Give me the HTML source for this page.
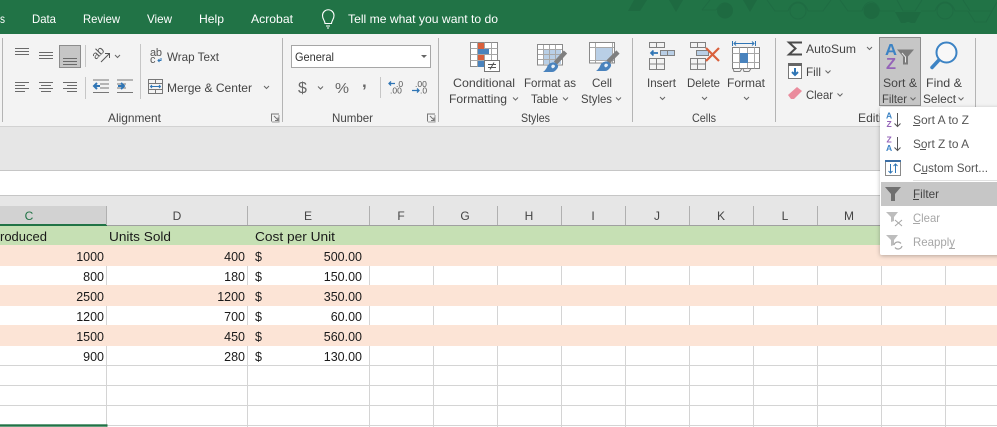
<!DOCTYPE html>
<html><head><meta charset="utf-8">
<style>
html,body{margin:0;padding:0;background:#fff;width:997px;height:427px;overflow:hidden}
svg{display:block}
text{font-family:"Liberation Sans",sans-serif;font-size:12px;fill:#444}
.t{fill:#fff;font-size:12px}
.r{fill:#444;font-size:12px}
.c{fill:#1a1a1a;font-size:12.5px}
.n{text-anchor:end}
.h{font-size:12px;fill:#444;text-anchor:middle}
.ln{stroke:#6a6a6a;stroke-width:1;fill:none}
.g{stroke:#8a8a8a;stroke-width:1;fill:none}
.ch{stroke:#666;stroke-width:1;fill:none}
.sep{stroke:#c6c6c6;stroke-width:1}
.gs{stroke:#b4b4b4;stroke-width:1}
</style></head>
<body>
<svg width="997" height="427" viewBox="0 0 997 427" xmlns="http://www.w3.org/2000/svg">
<defs>
<filter id="sh" x="-10%" y="-10%" width="120%" height="120%"><feDropShadow dx="0" dy="1" stdDeviation="2" flood-color="#000" flood-opacity=".28"/></filter>
</defs>
<!-- title bar -->
<rect width="997" height="34" fill="#217346"/>
<g fill="#1e6a41">
<path d="M634 0h13l-7 11h-12z"/><path d="M669 0h14l-7 12z"/><path d="M743 0h14l-7 12z"/>
<circle cx="725" cy="10.500" r="8"/><circle cx="871.500" cy="11" r="8"/>
<path d="M895 12h26l-6 11h-4l-2-1h-2l-2 1h-4z"/>
</g>
<g fill="none" stroke="#1f6c43" stroke-width="1">
<path d="M702 10h14M702 10l8-10M716 10c2-3 4-5 6-6"/>
<path d="M767 0l8 11h13M788 11c2-6 6-9 10-9s8 3 10 9M808 11h15l8-11"/>
<circle cx="798" cy="11" r="8"/>
<path d="M840 0l8 11h14M862 11c2-6 5-9 9-9s7 3 9 9h15M897 0l6 11h12l7-11"/>
<path d="M921 11h14M935 11c2-6 6-9 10-9s8 3 10 9h13"/>
<circle cx="945" cy="11" r="8"/>
<path d="M963 0l7 11h22l5-9M968 11l7 11h11l6-11"/>
</g>
<text class="t" x="0" y="23" textLength="5" lengthAdjust="spacingAndGlyphs">s</text>
<text class="t" x="32" y="23" textLength="24" lengthAdjust="spacingAndGlyphs">Data</text>
<text class="t" x="83" y="23" textLength="37" lengthAdjust="spacingAndGlyphs">Review</text>
<text class="t" x="147" y="23" textLength="25" lengthAdjust="spacingAndGlyphs">View</text>
<text class="t" x="199" y="23" textLength="25" lengthAdjust="spacingAndGlyphs">Help</text>
<text class="t" x="251" y="23" textLength="42" lengthAdjust="spacingAndGlyphs">Acrobat</text>
<text class="t" x="348" y="23" textLength="150" lengthAdjust="spacingAndGlyphs">Tell me what you want to do</text>
<path d="M325 23.500c0-3-2.500-4-2.500-8a5.700 5.700 0 0 1 11.500 0c0 4-2.500 5-2.500 8zM326 26h4M327 28h2" fill="none" stroke="#fff" stroke-width="1.100"/>

<!-- ribbon -->
<rect y="34" width="997" height="92" fill="#f3f3f3"/>
<rect y="126" width="997" height="1" fill="#d2d2d2"/>
<rect y="127" width="997" height="43" fill="#e6e6e6"/>
<rect y="170" width="997" height="1" fill="#c6c6c6"/>
<rect y="171" width="997" height="24" fill="#fff"/>
<rect y="195" width="997" height="1" fill="#c6c6c6"/>
<g class="gs"><path d="M2.500 38v84M282.500 38v84M438.500 38v84M632.500 38v84M775.500 38v84M975.500 38v84" stroke="#b4b4b4"/></g>

<!-- alignment -->
<path class="ln" d="M15 48.500h14M15 51.500h14M15 54.500h14M39 52.500h14M39 55.500h14M39 58.500h14"/>
<rect x="59.500" y="45.500" width="21" height="22" fill="#c6c6c6" stroke="#8c8c8c"/>
<path class="ln" d="M63 58.500h14M63 61.500h14M63 64.500h14"/>
<path class="ln" d="M15 82.500h14M15 85.500h10M15 88.500h14M15 91.500h10M39 82.500h14M41 85.500h10M39 88.500h14M41 91.500h10M63 82.500h14M67 85.500h10M63 88.500h14M67 91.500h10"/>
<path class="sep" d="M85.500 45v22M85.500 77v22M140.500 44v55"/>
<text transform="translate(96,60) rotate(-45)" style="font-size:11.500px;fill:#555">ab</text>
<path d="M101 62l8-8M105 53.500h4.500v4.500" fill="none" stroke="#555" stroke-width="1"/>
<path class="ch" d="M115 55l2.500 2.500 2.500-2.500"/>
<path d="M93 80h16M100 84h9M100 88h9M93 92.500h16" fill="none" stroke="#777"/>
<path d="M94 86h6M97 83l-3 3 3 3" fill="none" stroke="#2f75b5" stroke-width="2"/>
<path d="M117 80h16M117 84h9M117 88h9M117 92.500h16" fill="none" stroke="#777"/>
<path d="M118 86h6M121 83l3 3-3 3" fill="none" stroke="#2f75b5" stroke-width="2"/>
<text x="150" y="56" style="font-size:11px;fill:#555" textLength="12">ab</text>
<text x="150" y="63" style="font-size:11px;fill:#555">c</text>
<path d="M161 58v2.500h-3M159.500 59l-1.500 1.500 1.500 1.500" fill="none" stroke="#2f75b5"/>
<text class="r" x="167" y="61" textLength="52" lengthAdjust="spacingAndGlyphs">Wrap Text</text>
<rect x="148.500" y="79.500" width="14" height="14" fill="none" stroke="#777"/>
<path d="M148.500 83.500h14M148.500 89.500h14M155.500 79.500v4M155.500 89.500v4" stroke="#777" fill="none"/>
<path d="M150.500 86.500h10M152 85l-1.500 1.500 1.500 1.500M159 85l1.500 1.500-1.500 1.500" stroke="#2f75b5" fill="none"/>
<text class="r" x="167" y="92" textLength="85" lengthAdjust="spacingAndGlyphs">Merge &amp; Center</text>
<path class="ch" d="M264 86l2.500 2.500 2.500-2.500"/>
<text class="r" x="108" y="122" textLength="53" lengthAdjust="spacingAndGlyphs">Alignment</text>
<g fill="none" stroke="#777"><path d="M271.500 121.500v-7.500h7.500"/><path d="M279 115v7h-7" stroke="#999"/><path d="M274 116l4 4M278 117.500v3h-3"/></g>

<!-- number -->
<rect x="291.500" y="45.500" width="139" height="22" fill="#fff" stroke="#a6a6a6"/>
<text class="r" x="295" y="61" textLength="39" lengthAdjust="spacingAndGlyphs" style="fill:#333">General</text>
<path d="M421 55h6l-3 3z" fill="#666"/>
<text x="298" y="93" style="font-size:16px;fill:#666" textLength="9">$</text>
<path class="ch" d="M318 86.500l2.500 2.500 2.500-2.500"/>
<text x="335" y="93" style="font-size:15px;fill:#666" textLength="14" lengthAdjust="spacingAndGlyphs">%</text>
<text x="362" y="87" style="font-size:17px;font-weight:bold;fill:#666">,</text>
<path class="sep" d="M380.500 77v21"/>
<text x="396" y="87" style="font-size:8.500px;fill:#555">.0</text>
<text x="390" y="93.500" style="font-size:8.500px;fill:#555">.00</text>
<path d="M389 83.500h6M391 81.500l-2 2 2 2" fill="none" stroke="#2f75b5" stroke-width="1.300"/>
<text x="415" y="87" style="font-size:8.500px;fill:#555">.00</text>
<text x="420" y="93.500" style="font-size:8.500px;fill:#555">.0</text>
<path d="M412 90.500h7M417 88.500l2 2-2 2" fill="none" stroke="#2f75b5" stroke-width="1.300"/>
<text class="r" x="332" y="122" textLength="41" lengthAdjust="spacingAndGlyphs">Number</text>
<g fill="none" stroke="#777"><path d="M427.500 121.500v-7.500h7.500"/><path d="M435 115v7h-7" stroke="#999"/><path d="M430 116l4 4M434 117.500v3h-3"/></g>

<!-- styles: conditional -->
<path d="M470.500 42.500h27v24h-27z" fill="#fff" stroke="#8a8a8a"/>
<path d="M470.500 48.500h27M470.500 54.500h27M470.500 60.500h27M477.500 42.500v24M484.500 42.500v24M491.500 42.500v24" fill="none" stroke="#a6a6a6"/>
<rect x="478" y="43" width="6" height="6" fill="#d9603c"/>
<rect x="478" y="49" width="11" height="5" fill="#4a83bd"/>
<rect x="478" y="55" width="6" height="5" fill="#d9603c"/>
<rect x="478" y="61" width="6" height="6" fill="#4a83bd"/>
<rect x="484.500" y="60.500" width="15" height="11" fill="#fff" stroke="#777"/>
<path d="M488 64.500h8M488 67.500h8M494 62.500l-4 7" stroke="#555" fill="none"/>
<text class="r" x="453" y="87" textLength="62" lengthAdjust="spacingAndGlyphs">Conditional</text>
<text class="r" x="449" y="103" textLength="58" lengthAdjust="spacingAndGlyphs">Formatting</text>
<path class="ch" d="M513 97.500l2.500 2.500 2.500-2.500"/>
<!-- format as table -->
<rect x="537" y="44" width="25" height="21" fill="#fff"/>
<rect x="543" y="49" width="18" height="15" fill="#b9cfe6"/>
<path d="M543.500 44.500v20M549.500 44.500v20M555.500 44.500v20M537.500 49.500h25M537.500 54.500h25M537.500 59.500h25" fill="none" stroke="#a8a8a8"/>
<rect x="537.500" y="44.500" width="25" height="20.500" fill="none" stroke="#8a8a8a"/>
<path d="M565.500 52l-10 11" stroke="#7f7f7f" stroke-width="4.500"/>
<path d="M551 63c2-1 4-1 6 1 2 2 1 4-1 6-1 1-2 2-4 2h-9c3-2 4-5 5-7 1-1 2-2 3-2z" fill="#4a83bd"/>
<path d="M552 65c1-1 3 0 3 1s-2 3-3 2-1-2 0-3z" fill="#e8f0f7"/>
<text class="r" x="524" y="87" textLength="52" lengthAdjust="spacingAndGlyphs">Format as</text>
<text class="r" x="531" y="103" textLength="27" lengthAdjust="spacingAndGlyphs">Table</text>
<path class="ch" d="M563 97.500l2.500 2.500 2.500-2.500"/>
<!-- cell styles -->
<rect x="589" y="42" width="26" height="21" fill="#fff"/>
<rect x="596" y="48" width="16" height="12" fill="#b9cfe6"/>
<path d="M595.500 42.500v20M612.500 42.500v20M589.500 47.500h25M589.500 60.500h25" fill="none" stroke="#a8a8a8"/>
<rect x="589.500" y="42.500" width="25" height="20.500" fill="none" stroke="#8a8a8a"/>
<path d="M618 52l-10 10" stroke="#7f7f7f" stroke-width="4.500"/>
<path d="M604 62c2-1 4-1 6 1 2 2 1 4-1 6-1 1-2 2-4 2h-9c3-2 4-5 5-7 1-1 2-2 3-2z" fill="#4a83bd"/>
<path d="M605 64c1-1 3 0 3 1s-2 3-3 2-1-2 0-3z" fill="#e8f0f7"/>
<text class="r" x="592" y="87" textLength="20" lengthAdjust="spacingAndGlyphs">Cell</text>
<text class="r" x="581" y="103" textLength="31" lengthAdjust="spacingAndGlyphs">Styles</text>
<path class="ch" d="M616 97.500l2.500 2.500 2.500-2.500"/>
<text class="r" x="521" y="122" textLength="29" lengthAdjust="spacingAndGlyphs">Styles</text>

<!-- cells -->
<g fill="none" stroke="#808080">
<path d="M649.500 42.500h15v5h-15zM656.500 42.500v5"/>
<path d="M649.500 58.500h15v11h-15zM649.500 64h15M656.500 58.500v11"/>
<path d="M690.500 42.500h15v5h-15zM697.500 42.500v5"/>
<path d="M690.500 58.500h15v11h-15zM690.500 64h15M697.500 58.500v11"/>
</g>
<rect x="660.500" y="50.500" width="14" height="5" fill="#b9cfe6" stroke="#808080"/><path d="M667.500 50.500v5" stroke="#808080"/>
<path d="M651 53h7M653.500 50.500l-2.500 2.500 2.500 2.500" fill="none" stroke="#2f75b5" stroke-width="1.700"/>
<rect x="696.500" y="50.500" width="12" height="5" fill="#b9cfe6" stroke="#808080"/>
<path d="M706 48l13 13M719 48l-13 13" stroke="#d9603c" stroke-width="2.200"/>
<path d="M732.500 41v5M755.500 41v5M734 43.500h20M736 41.500l-2 2 2 2M752 41.500l2 2-2 2" fill="none" stroke="#2f75b5"/>
<rect x="732.500" y="47.500" width="27" height="21" fill="#fff" stroke="#808080"/>
<path d="M739.500 47.500v21M747.500 47.500v21M754.500 47.500v21M732.500 53.500h27M732.500 62.500h27" stroke="#a6a6a6" fill="none"/>
<rect x="740" y="53" width="8" height="10" fill="#4a83bd"/>
<path d="M733 68.500l1 3h6l2-3M743 68.500l1 3h5l2-3" fill="none" stroke="#808080"/>
<text class="r" x="647" y="87" textLength="29" lengthAdjust="spacingAndGlyphs">Insert</text>
<text class="r" x="687" y="87" textLength="33" lengthAdjust="spacingAndGlyphs">Delete</text>
<text class="r" x="727" y="87" textLength="38" lengthAdjust="spacingAndGlyphs">Format</text>
<path class="ch" d="M660 97l2.500 2.500 2.500-2.500M702 97l2.500 2.500 2.500-2.500M744 97l2.500 2.500 2.500-2.500"/>
<text class="r" x="692" y="122" textLength="24" lengthAdjust="spacingAndGlyphs">Cells</text>

<!-- editing -->
<path d="M802 42.500h-13l6.500 6-6.500 6h13" fill="none" stroke="#4a4a4a" stroke-width="2"/>
<text class="r" x="806" y="53" textLength="50" lengthAdjust="spacingAndGlyphs">AutoSum</text>
<path class="ch" d="M867 47l2.500 2.500 2.500-2.500"/>
<rect x="788.500" y="63.500" width="13" height="15" fill="#fff" stroke="#777"/><rect x="788" y="63" width="14" height="3" fill="#666"/>
<path d="M795 68v7M792 72l3 3 3-3" fill="none" stroke="#2f75b5" stroke-width="2"/>
<text class="r" x="806" y="76" textLength="15" lengthAdjust="spacingAndGlyphs">Fill</text>
<path class="ch" d="M825.500 70.500l2.500 2.500 2.500-2.500"/>
<path d="M797 87l5 4-8 8h-3l-3-4z" fill="#ea8c9d"/>
<text class="r" x="806" y="99" textLength="27" lengthAdjust="spacingAndGlyphs">Clear</text>
<path class="ch" d="M837.500 93.500l2.500 2.500 2.500-2.500"/>
<rect x="879.500" y="37.500" width="41" height="68" fill="#c6c6c6" stroke="#8c8c8c"/>
<text x="885" y="55" style="font-size:16px;font-weight:bold;fill:#3c83c4" textLength="12" lengthAdjust="spacingAndGlyphs">A</text>
<text x="886" y="69" style="font-size:16px;font-weight:bold;fill:#9464b8" textLength="10" lengthAdjust="spacingAndGlyphs">Z</text>
<path d="M897 49.500h17l-6 7v8h-5v-8z" fill="#7c7c7c"/>
<path d="M902 53l3.500 4v5.500" fill="none" stroke="#e8e8e8"/>
<text class="r" x="883" y="87" textLength="34" lengthAdjust="spacingAndGlyphs">Sort &amp;</text>
<text class="r" x="882" y="103" textLength="25" lengthAdjust="spacingAndGlyphs">Filter</text>
<path class="ch" d="M910.500 97.500l2.500 2.500 2.500-2.500"/>
<circle cx="946.500" cy="52.500" r="10" fill="#f8f8f8" stroke="#3c83c4" stroke-width="2"/>
<path d="M938.500 60.500l-6.500 7" stroke="#3c83c4" stroke-width="3.500" stroke-linecap="round"/>
<text class="r" x="926" y="87" textLength="36" lengthAdjust="spacingAndGlyphs">Find &amp;</text>
<text class="r" x="923" y="103" textLength="33" lengthAdjust="spacingAndGlyphs">Select</text>
<path class="ch" d="M958.500 97.500l2.500 2.500 2.500-2.500"/>
<text class="r" x="858" y="122" textLength="37" lengthAdjust="spacingAndGlyphs">Editing</text>

<!-- sheet header -->
<rect y="196" width="997" height="29" fill="#e6e6e6"/>
<rect y="206" width="106" height="19" fill="#d2d2d2"/>
<rect y="225" width="997" height="1" fill="#a0a0a0"/>
<rect y="224" width="107" height="2" fill="#217346"/>
<path d="M106.500 206v19M247.500 206v19M369.500 206v19M433.500 206v19M497.500 206v19M561.500 206v19M625.500 206v19M689.500 206v19M753.500 206v19M817.500 206v19M881.500 206v19M945.500 206v19" stroke="#b0b0b0"/>
<text class="h" x="29" y="220" style="fill:#217346">C</text>
<text class="h" x="177" y="220">D</text>
<text class="h" x="308" y="220">E</text>
<text class="h" x="401" y="220">F</text>
<text class="h" x="465" y="220">G</text>
<text class="h" x="529" y="220">H</text>
<text class="h" x="593" y="220">I</text>
<text class="h" x="657" y="220">J</text>
<text class="h" x="721" y="220">K</text>
<text class="h" x="785" y="220">L</text>
<text class="h" x="849" y="220">M</text>

<!-- grid -->
<rect y="226" width="997" height="19" fill="#c6e0b4"/>
<rect y="245" width="997" height="21" fill="#fce4d6"/>
<rect y="285" width="997" height="21" fill="#fce4d6"/>
<rect y="325" width="997" height="21" fill="#fce4d6"/>
<path d="M106.500 266v19M247.500 266v19M369.500 266v19M433.500 266v19M497.500 266v19M561.500 266v19M625.500 266v19M689.500 266v19M753.500 266v19M817.500 266v19M881.500 266v19M945.500 266v19M106.500 306v19M247.500 306v19M369.500 306v19M433.500 306v19M497.500 306v19M561.500 306v19M625.500 306v19M689.500 306v19M753.500 306v19M817.500 306v19M881.500 306v19M945.500 306v19M106.500 346v81M247.500 346v81M369.500 346v81M433.500 346v81M497.500 346v81M561.500 346v81M625.500 346v81M689.500 346v81M753.500 346v81M817.500 346v81M881.500 346v81M945.500 346v81M0 365.500h997M0 385.500h997M0 405.500h997M0 425.500h997" stroke="#d4d4d4" fill="none"/>
<rect y="424.300" width="107.500" height="2.400" fill="#217346"/>

<text class="c" x="0" y="241" textLength="47" lengthAdjust="spacingAndGlyphs">roduced</text>
<text class="c" x="109" y="241" textLength="62" lengthAdjust="spacingAndGlyphs">Units Sold</text>
<text class="c" x="255" y="241" textLength="80" lengthAdjust="spacingAndGlyphs">Cost per Unit</text>

<text class="c n" x="104" y="261">1000</text><text class="c n" x="245" y="261">400</text><text class="c" x="255" y="261">$</text><text class="c n" x="362" y="261">500.00</text>
<text class="c n" x="104" y="281">800</text><text class="c n" x="245" y="281">180</text><text class="c" x="255" y="281">$</text><text class="c n" x="362" y="281">150.00</text>
<text class="c n" x="104" y="301">2500</text><text class="c n" x="245" y="301">1200</text><text class="c" x="255" y="301">$</text><text class="c n" x="362" y="301">350.00</text>
<text class="c n" x="104" y="321">1200</text><text class="c n" x="245" y="321">700</text><text class="c" x="255" y="321">$</text><text class="c n" x="362" y="321">60.00</text>
<text class="c n" x="104" y="341">1500</text><text class="c n" x="245" y="341">450</text><text class="c" x="255" y="341">$</text><text class="c n" x="362" y="341">560.00</text>
<text class="c n" x="104" y="361">900</text><text class="c n" x="245" y="361">280</text><text class="c" x="255" y="361">$</text><text class="c n" x="362" y="361">130.00</text>

<!-- dropdown -->
<rect x="880" y="107" width="130" height="148" rx="2" fill="#fff" filter="url(#sh)"/>
<rect x="881" y="182" width="116" height="24" fill="#c6c6c6"/>
<path d="M913 180.500h84" stroke="#e1e1e1"/>
<!-- a-z icons -->
<text x="886" y="118.500" style="font-size:8.500px;font-weight:bold;fill:#3c83c4">A</text>
<text x="886.500" y="127" style="font-size:8.500px;font-weight:bold;fill:#9464b8">Z</text>
<path d="M897.500 113v13.500M894.500 123.500l3 3 3-3" fill="none" stroke="#555"/>
<text x="886.500" y="142.500" style="font-size:8.500px;font-weight:bold;fill:#9464b8">Z</text>
<text x="886" y="151" style="font-size:8.500px;font-weight:bold;fill:#3c83c4">A</text>
<path d="M897.500 137v13.500M894.500 147.500l3 3 3-3" fill="none" stroke="#555"/>
<rect x="885.500" y="161.500" width="15" height="14" fill="#fff" stroke="#8a8a8a"/><rect x="885" y="160" width="16" height="2" fill="#3c6fa5"/>
<path d="M890.500 164v9M888.500 171l2 2 2-2M895.500 173v-9M893.500 166l2-2 2 2" fill="none" stroke="#2f75b5"/>
<path d="M885 187h16l-6 7v7h-4v-7z" fill="#6f6f6f"/>
<path d="M886 212h12l-4 5v4l-3 1v-5z" fill="#bdbdbd"/><path d="M895 220l7 6M902 220l-7 6" stroke="#a6a6a6"/>
<path d="M886 235h12l-4 5v5l-3 1v-6z" fill="#bdbdbd"/><path d="M894 245a4 4 0 0 1 7-1.500M902 246a4 4 0 0 1-7 1.500" fill="none" stroke="#a6a6a6" stroke-width="1.200"/>
<text class="r" x="913" y="124" textLength="56" lengthAdjust="spacingAndGlyphs" style="fill:#555">Sort A to Z</text>
<path d="M913 125.500h7" stroke="#555"/>
<text class="r" x="913" y="148" textLength="56" lengthAdjust="spacingAndGlyphs" style="fill:#555">Sort Z to A</text>
<path d="M920 149.500h6" stroke="#555"/>
<text class="r" x="913" y="172" textLength="75" lengthAdjust="spacingAndGlyphs" style="fill:#555">Custom Sort...</text>
<path d="M921 173.500h6" stroke="#555"/>
<text class="r" x="913" y="198" textLength="26" lengthAdjust="spacingAndGlyphs" style="fill:#444">Filter</text>
<path d="M913 199.500h6" stroke="#444"/>
<text class="r" x="913" y="222" textLength="27" lengthAdjust="spacingAndGlyphs" style="fill:#a6a6a6">Clear</text>
<path d="M913 223.500h7" stroke="#a6a6a6"/>
<text class="r" x="913" y="246" textLength="42" lengthAdjust="spacingAndGlyphs" style="fill:#a6a6a6">Reapply</text>
<path d="M949 248.500h6" stroke="#a6a6a6"/>
</svg>
</body></html>
